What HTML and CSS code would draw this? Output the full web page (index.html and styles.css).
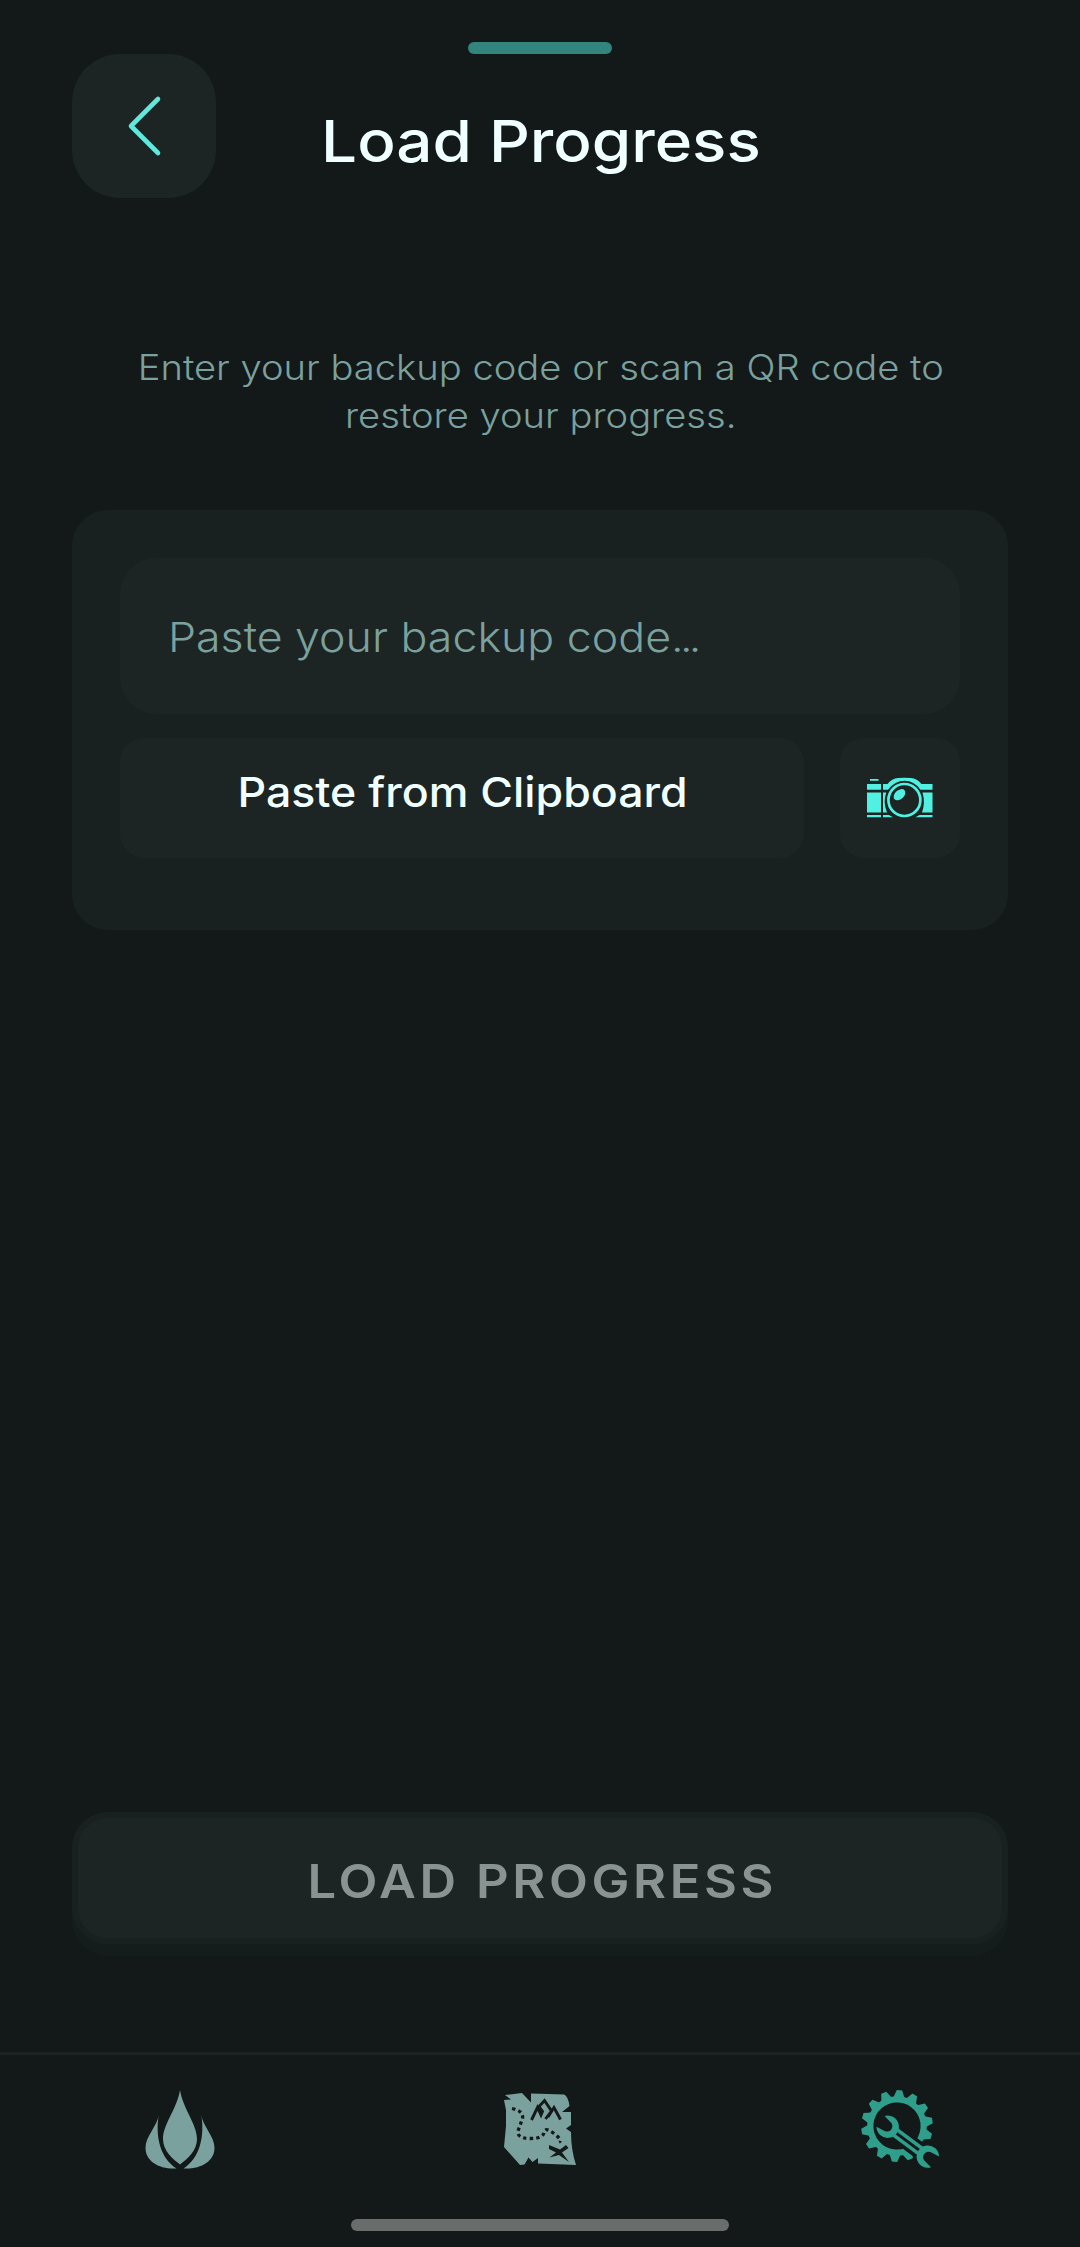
FILE: index.html
```
<!DOCTYPE html>
<html lang="en">
<head>
<meta charset="utf-8">
<title>Load Progress</title>
<link rel="stylesheet" href="styles.css">
</head>
<body>
<div class="screen">
  <header class="header">
    <button class="back" aria-label="Back">
      <svg width="36" height="62" viewBox="0 0 36 62"><path d="M32 4 5 31 32 58" fill="none" stroke="#5fe8dc" stroke-width="4.6" stroke-linecap="round" stroke-linejoin="round"/></svg>
    </button>
    <div class="heading">
      <div class="grabber"></div>
      <h1 class="title"><span class="wide">Load Progress</span></h1>
    </div>
  </header>
  <p class="intro"><span class="wide">Enter your backup code or scan a QR code to<br>restore your progress.</span></p>
  <section class="card">
    <div class="field"><span class="wide from-left">Paste your backup code<span class="dots">...</span></span></div>
    <div class="actions">
      <button class="paste"><span class="wide">Paste from Clipboard</span></button>
      <button class="camera" aria-label="Scan QR code">
        <svg width="72" height="72" viewBox="864 762 72 72">
          <g fill="#50f0e2">
            <path d="M870 779h8.500v1.800h-8.500zM867 784h14v5.700h-14zM867 792.500h14v20h-14zM867 815h14v2.300h-14z"/>
            <path d="M883 784h4.500Q892 778.500 898 778Q904.500 777.400 911 778Q917 778.500 921.500 784H932.500V789.700H920.500Q914 780.800 904.500 780.800T888 789.700H883zM883 792.500h3.300q-3.600 9 .7 20h-4zM922.500 792.500h10v20h-10.500q3.500-10 .5-20zM883 815h6l4 2.300h-10zM919.500 815h13v2.300h-17z"/>
            <circle cx="904.400" cy="800" r="16" fill="none" stroke="#50f0e2" stroke-width="2.700"/>
            <ellipse cx="899.500" cy="794.700" rx="6.700" ry="4.500" transform="rotate(-42 899.500 794.700)"/>
          </g>
        </svg>
      </button>
    </div>
  </section>
  <button class="load"><span class="wide">LOAD PROGRESS</span></button>
  <nav class="tabs">
    <a class="tab" aria-label="Home">
      <svg width="84" height="84" viewBox="138 2086 84 84" fill="#7ba19e"><path d="M180 2090c3 19 17 34 17 49 0 12-10 20-17 25.500-7-5.500-17-13.500-17-25.500 0-15 14-30 17-49zM158.700 2115c-3.500 21 1.300 43 17.800 53.500-17 1-31-7-31-20.500 0-12 12-22 13.200-33zM201.300 2115c3.500 21-1.300 43-17.800 53.500 17 1 31-7 31-20.500 0-12-12-22-13.200-33z"/></svg>
    </a>
    <a class="tab" aria-label="Map">
      <svg width="84" height="84" viewBox="498 2086 84 84">
        <path fill="#7ba19e" d="M505 2095 522 2093 531 2102.500V2093.500L564 2094.500Q568 2096 569.500 2106L562 2112H571V2125L566 2128.500 571 2132Q571 2150 576 2165L538 2163.500V2158L532.500 2162 528.500 2157.500 524.500 2164.500 520 2165 504 2147 506 2126V2110L504 2100 511 2099.500z"/>
        <path fill="none" stroke="#131919" stroke-width="2.900" d="M531.500 2120 537.500 2107.500 541 2115 542.500 2111.500 539 2106.500 544.500 2100.500 551.500 2111 545.500 2119M548 2117 554 2107.500 560.500 2119.500"/>
        <path fill="none" stroke="#131919" stroke-width="3.300" stroke-dasharray="3.300 3.200" d="M512 2108.500Q524 2111 522.500 2118.500L518 2131Q517 2138.500 530 2138.500T544 2132.500 554 2133.500 559 2142"/>
        <path fill="#131919" d="M549 2145 560 2149.500 566 2145 568.500 2148 562 2152.500 569 2162 559 2155 549.500 2157.500 556 2152.500 549 2149z"/>
      </svg>
    </a>
    <a class="tab" aria-label="Settings">
      <svg width="84" height="84" viewBox="858 2086 84 84">
        <defs><path id="tooth" d="M-5.500-28.500-2.700-35.800H2.700L5.500-28.500z"/></defs>
        <g transform="translate(897 2126) rotate(4)" fill="#2f9e8b">
          <circle r="26.700" fill="none" stroke="#2f9e8b" stroke-width="6.200"/>
          <use href="#tooth"/>
          <use href="#tooth" transform="rotate(25.714)"/>
          <use href="#tooth" transform="rotate(51.429)"/>
          <use href="#tooth" transform="rotate(77.143)"/>
          <use href="#tooth" transform="rotate(102.857)"/>
          <use href="#tooth" transform="rotate(154.286)"/>
          <use href="#tooth" transform="rotate(180)"/>
          <use href="#tooth" transform="rotate(205.714)"/>
          <use href="#tooth" transform="rotate(231.429)"/>
          <use href="#tooth" transform="rotate(257.143)"/>
          <use href="#tooth" transform="rotate(282.857)"/>
          <use href="#tooth" transform="rotate(308.571)"/>
          <use href="#tooth" transform="rotate(334.286)"/>
        </g>
        <g transform="translate(887.700 2126.700) rotate(36.700)">
          <path d="M14 0H50" stroke="#131919" stroke-width="17"/>
          <circle cx="50" r="13.700" fill="#131919"/>
          <path d="M8 0H42" stroke="#2f9e8b" stroke-width="10"/>
          <path d="M9 0H40" stroke="#131919" stroke-width="3"/>
          <path id="jaw" fill="#2f9e8b" d="M-9-6.700A11.200 11.200 0 1 1-9 6.700L-1 5.500A5.500 5.500 0 0 0-1-5.500z"/>
          <use href="#jaw" transform="translate(50) scale(-1 1)"/>
        </g>
      </svg>
    </a>
  </nav>
  <div class="home"></div>
</div>
</body>
</html>
```
FILE: styles.css
```
* { box-sizing: border-box; }
body { margin: 0; background: #131919; font-family: Inter, "Liberation Sans", sans-serif; }
button { border: 0; padding: 0; font: inherit; color: inherit; display: flex; align-items: center; justify-content: center; }
svg { display: block; }
.screen { width: 1080px; height: 2247px; display: flex; flex-direction: column; background: #131919; overflow: hidden; }
/* Broadens the letterforms of the interface face. */
.wide { display: inline-block; transform: scaleX(1.09); white-space: nowrap; }
.from-left { transform-origin: left center; }
.dots { letter-spacing: -3.5px; }
.header { height: 198px; flex: none; padding: 0 72px; display: grid; grid-template-columns: 144px 1fr 144px; }
.back { margin-top: 54px; width: 144px; height: 144px; border-radius: 48px; background: #1c2524; }
.heading { display: flex; flex-direction: column; align-items: center; padding-top: 42px; }
.grabber { width: 144px; height: 12px; border-radius: 6px; background: #32857c; flex: none; }
.title { margin: 51px 0 0; height: 72px; line-height: 72px; font-size: 57.7px; font-weight: 480; color: #f0ffff; padding-left: 2px; }
.title .wide { transform: scaleX(1.105); }
.intro { margin: 145px 0 0; height: 96px; flex: none; text-align: center; font-size: 35px; line-height: 48px; font-weight: 350; color: #7ba19e; padding-left: 2px; }
.card { margin: 71px 72px 0; height: 420px; flex: none; border-radius: 36px; background: #182120; padding: 48px; }
.field { height: 156px; border-radius: 36px; background: #1c2524; padding: 2px 48px 0; display: flex; align-items: center; font-size: 41px; font-weight: 350; color: #7ba19e; }
.actions { margin-top: 24px; display: flex; gap: 36px; }
.paste { flex: 1; height: 120px; border-radius: 24px; background: #1c2524; color: #f0ffff; font-size: 41px; font-weight: 500; padding: 0 0 12px 1px; }
.camera { width: 120px; height: 120px; border-radius: 24px; background: #1c2524; }
.load { margin: 882px 72px 0; height: 132px; flex: none; border: 6px solid #182120; border-radius: 36px; background: #1c2524; box-shadow: 0 12px 0 #141d1c; color: #899392; font-size: 46.5px; font-weight: 600; letter-spacing: 3.3px; padding: 5px 0 0 5px; }
.tabs { margin-top: 108px; height: 167px; flex: none; border-top: 3px solid #1c2323; padding-top: 31px; display: grid; grid-template-columns: repeat(3, 1fr); justify-items: center; }
.home { width: 378px; height: 12px; border-radius: 6px; background: #696d6c; align-self: center; flex: none; }
```
